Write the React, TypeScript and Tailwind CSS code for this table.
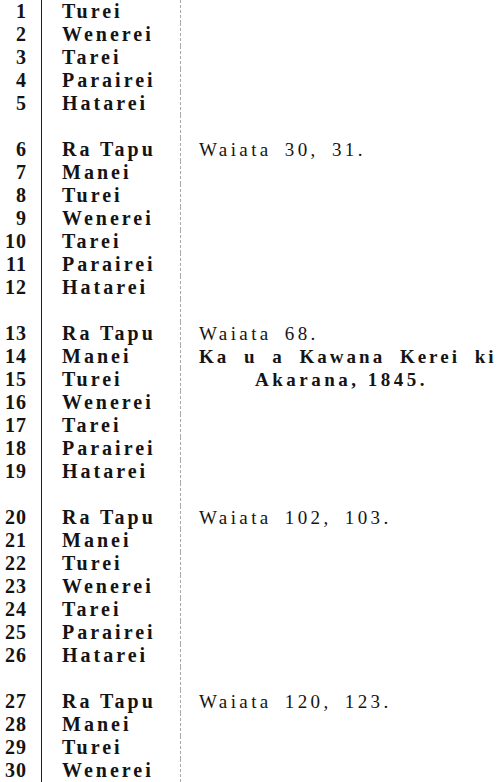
import React from "react";

type Row = { n?: number; day?: string; note?: string; kind?: "plain" | "wide" | "indent" };

const WEEK = ["Ra Tapu", "Manei", "Turei", "Wenerei", "Tarei", "Parairei", "Hatarei"];

// notes keyed by day of the month
const NOTES: Record<number, { text: string; kind: "plain" | "wide" | "indent" }> = {
  6: { text: "Waiata 30, 31.", kind: "plain" },
  13: { text: "Waiata 68.", kind: "plain" },
  14: { text: "Ka u a Kawana Kerei ki", kind: "wide" },
  15: { text: "Akarana, 1845.", kind: "indent" },
  20: { text: "Waiata 102, 103.", kind: "plain" },
  27: { text: "Waiata 120, 123.", kind: "plain" },
};

const NOTE_CLASS = {
  plain: "text-[19px] font-normal tracking-[3.4px] [word-spacing:5px]",
  wide: "text-[19px] font-bold tracking-[3px] [word-spacing:7px]",
  indent: "pl-[56px] text-[19px] font-bold tracking-[3.5px]",
};

// month starts on a Tuesday (Turei); a blank line after each Saturday
function buildRows(): Row[] {
  const out: Row[] = [];
  for (let n = 1; n <= 30; n++) {
    const day = WEEK[(n + 1) % 7];
    const note = NOTES[n];
    out.push({ n, day, note: note?.text, kind: note?.kind });
    if (day === "Hatarei") out.push({});
  }
  return out;
}

export default function App() {
  const rows = buildRows();
  return (
    <div className="h-[782px] w-[497px] overflow-hidden bg-white text-[#141414] [font-family:'Liberation_Serif','Times_New_Roman',serif]">
      {rows.map((r, i) => (
        <div key={i} className="flex h-[23px] leading-[23px]">
          <div className="w-[41px] shrink-0 pr-[14px] text-right text-[20px] font-bold tracking-[1px]">
            {r.n ?? ""}
          </div>
          <div className="w-[139px] shrink-0 border-l border-[#1e1e1e] pl-[20px] text-[20px] font-bold tracking-[3px] whitespace-nowrap">
            {r.day ?? ""}
          </div>
          <div className="min-w-0 flex-1 overflow-hidden border-l border-dashed border-[#a8a8a8] pl-[18px] whitespace-nowrap">
            {r.note && r.kind ? <span className={`inline-block ${NOTE_CLASS[r.kind]}`}>{r.note}</span> : null}
          </div>
        </div>
      ))}
    </div>
  );
}
